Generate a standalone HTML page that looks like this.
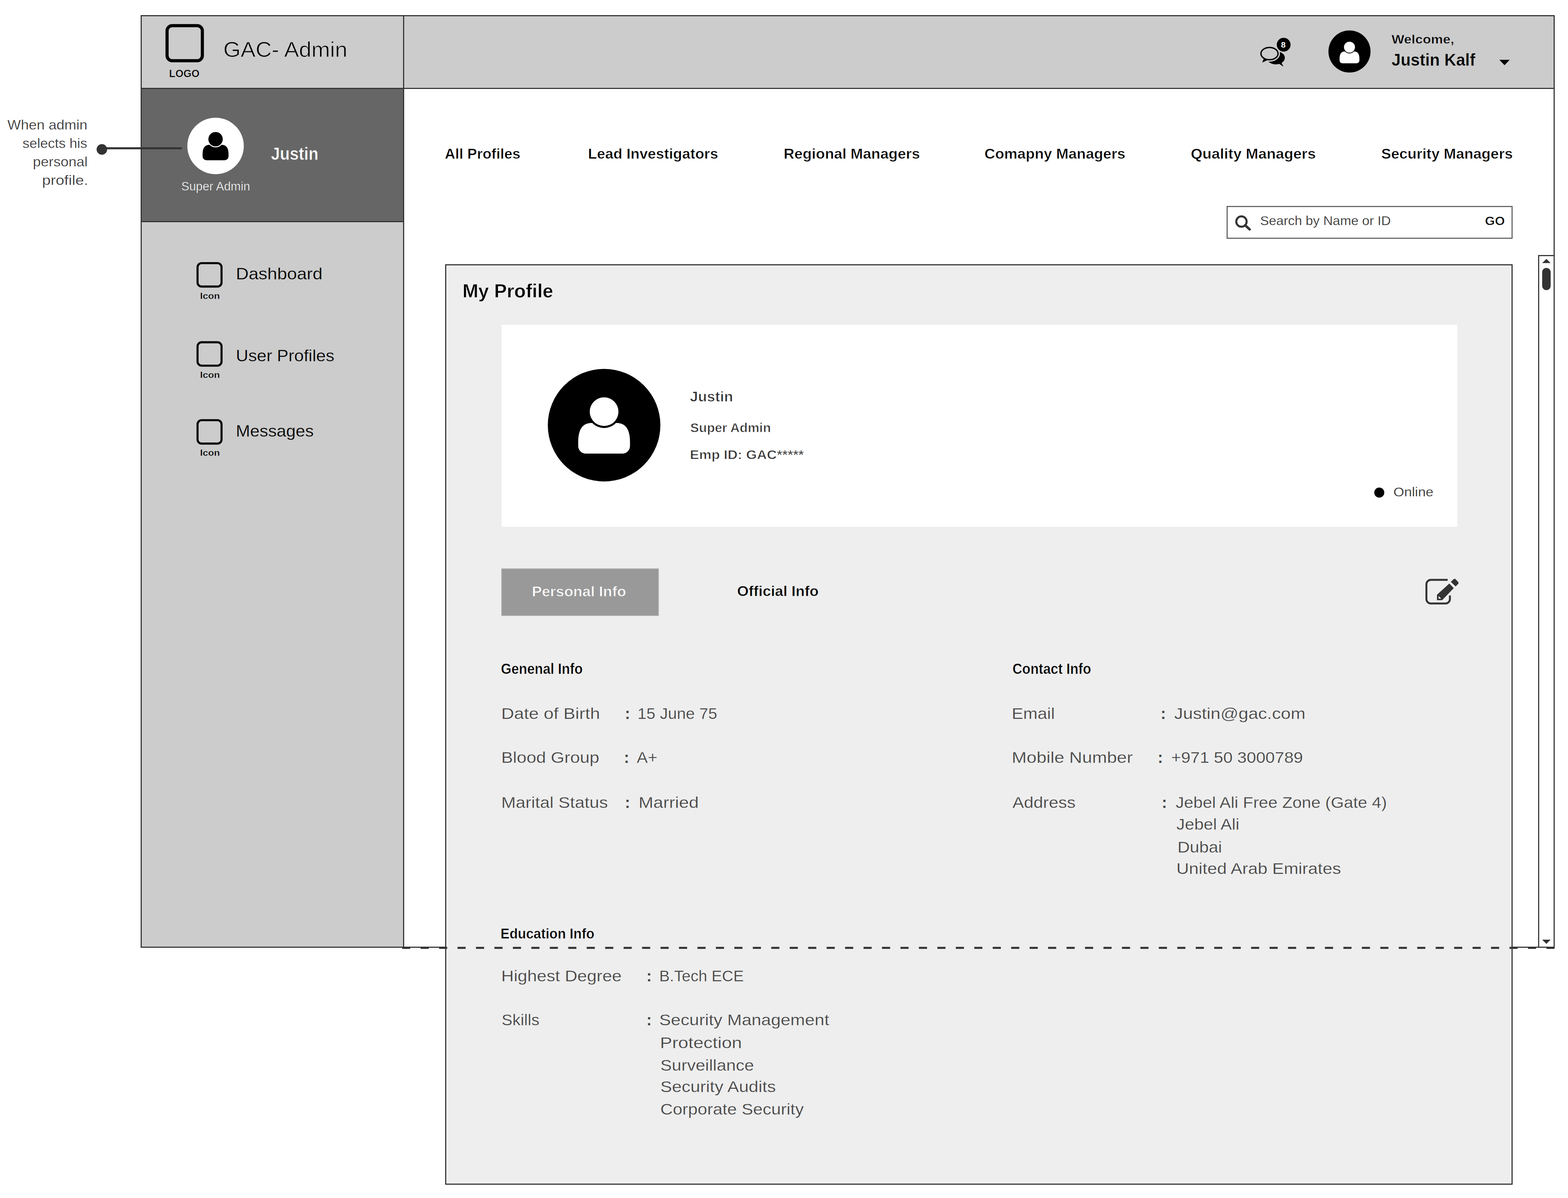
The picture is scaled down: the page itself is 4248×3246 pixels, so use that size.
<!DOCTYPE html>
<html lang="en">
<head>
<meta charset="utf-8">
<title>GAC- Admin - My Profile</title>
<style>
html,body{margin:0;padding:0;background:#fff;}
html{width:4248px;height:3246px;}
body{width:4248px;height:3246px;position:relative;font-family:"Liberation Sans",sans-serif;color:#000;}
#page{position:absolute;left:0;top:0;width:4248px;height:3246px;overflow:hidden;background:#fff;}
#page div,#page nav,#page header,#page aside,#page main,#page section{position:absolute;box-sizing:border-box;}
.t{position:absolute;white-space:pre;line-height:1;margin:0;padding:0;font-weight:400;transform-origin:0 0;}
#frame{left:381px;top:41px;width:3831px;height:2527px;border:3px solid #333;background:#fff;}
#header{left:384px;top:44px;width:3825px;height:197px;background:#ccc;border-bottom:3px solid #333;}
#sidebar{left:384px;top:44px;width:711px;height:2521px;background:#ccc;border-right:3px solid #333;}
#userblock{left:384px;top:238px;width:708px;height:364px;background:#666;border-top:3px solid #333;border-bottom:3px solid #333;}
#search{left:3323px;top:558px;width:775px;height:89px;border:3px solid #636363;background:#fff;}
#scroll{left:4167px;top:691px;width:45px;height:1877px;border:3px solid #333;background:#fff;}
#thumb{left:4178px;top:726px;width:23px;height:60px;border-radius:11.5px;background:#333;}
#panel{left:1206px;top:716px;width:2892px;height:2494px;border:3px solid #333;background:#eee;}
#card{left:1359px;top:880px;width:2589px;height:547px;background:#fff;}
#tab1{left:1358px;top:1540px;width:427px;height:129px;background:#999;border:2px solid #b0b0b0;}
svg#art{position:absolute;left:0;top:0;width:4248px;height:3246px;overflow:visible;}
</style>
</head>
<body>
<div id="page">
<div id="frame"></div>
<header id="header"></header>
<aside id="sidebar"></aside>
<div id="userblock"></div>
<div id="search"></div>
<div id="scroll"></div>
<div id="thumb"></div>
<main id="panel"></main>
<section id="card"></section>
<div id="tab1"></div>
<svg id="art" viewBox="0 0 4248 3246" width="4248" height="3246">
<!-- dashed fold line -->
<line x1="1089.5" y1="2568.3" x2="4212" y2="2568.3" stroke="#333" stroke-width="5.6" stroke-dasharray="22 28"/>
<!-- logo placeholder -->
<rect x="452.6" y="69.4" width="95.6" height="95.2" rx="14" ry="14" fill="none" stroke="#000" stroke-width="8.5"/>
<!-- sidebar icon placeholders -->
<rect x="535.2" y="713" width="65" height="63.4" rx="11" ry="11" fill="none" stroke="#000" stroke-width="5.6"/>
<rect x="535.2" y="927.4" width="65" height="63.4" rx="11" ry="11" fill="none" stroke="#000" stroke-width="5.6"/>
<rect x="535.2" y="1138.5" width="65" height="63.4" rx="11" ry="11" fill="none" stroke="#000" stroke-width="5.6"/>
<!-- annotation connector -->
<line x1="276" y1="401.8" x2="492.5" y2="401.8" stroke="#333" stroke-width="5.6"/>
<circle cx="276" cy="404.8" r="14.3" fill="#333"/>
<!-- sidebar avatar -->
<circle cx="584" cy="395.5" r="76.5" fill="#fff"/>
<g transform="translate(584,395.5) scale(0.765)" fill="#000">
<path d="M-46,30 C-46,10 -40,-4 -22,-4 L22,-4 C40,-4 46,10 46,30 L46,37 A13.5,13.5 0 0 1 32.5,50.5 L-32.5,50.5 A13.5,13.5 0 0 1 -46,37 Z"/>
<circle cx="0" cy="-24" r="29" fill="#fff"/>
<circle cx="0" cy="-24" r="25.5"/>
</g>
<!-- header avatar -->
<circle cx="3656" cy="139.5" r="57" fill="#000"/>
<g transform="translate(3656,141.9) scale(0.585)" fill="#fff">
<path d="M-46,30 C-46,10 -40,-4 -22,-4 L22,-4 C40,-4 46,10 46,30 L46,37 A13.5,13.5 0 0 1 32.5,50.5 L-32.5,50.5 A13.5,13.5 0 0 1 -46,37 Z"/>
<circle cx="0" cy="-24" r="29" fill="#000"/>
<circle cx="0" cy="-24" r="25.5"/>
</g>
<!-- card avatar -->
<circle cx="1636.6" cy="1152" r="152.5" fill="#000"/>
<g transform="translate(1636.6,1152) scale(1.525)" fill="#fff">
<path d="M-46,30 C-46,10 -40,-4 -22,-4 L22,-4 C40,-4 46,10 46,30 L46,37 A13.5,13.5 0 0 1 32.5,50.5 L-32.5,50.5 A13.5,13.5 0 0 1 -46,37 Z"/>
<circle cx="0" cy="-24" r="29" fill="#000"/>
<circle cx="0" cy="-24" r="25.5"/>
</g>
<!-- chat icon -->
<g>
<ellipse cx="3456.4" cy="156.6" rx="24.5" ry="17.8" fill="#000"/>
<path d="M3458,168 L3477,180.5 L3470,166 Z" fill="#000"/>
<ellipse cx="3439.3" cy="145.2" rx="28.5" ry="22" fill="#ccc"/>
<path d="M3425,156 L3419.5,169.5 L3436,162 Z" fill="#000"/>
<ellipse cx="3439.3" cy="145.2" rx="23.2" ry="16.6" fill="#ccc" stroke="#000" stroke-width="3.6"/>
<circle cx="3477.7" cy="121.1" r="18.7" fill="#000"/>
</g>
<!-- caret -->
<path d="M4062,162 L4090,162 L4076,176.7 Z" fill="#000"/>
<!-- search icon -->
<circle cx="3363.3" cy="600.3" r="14" fill="none" stroke="#333" stroke-width="5.6"/>
<line x1="3373.5" y1="610.5" x2="3385.5" y2="621.5" stroke="#333" stroke-width="6.5" stroke-linecap="round"/>
<!-- scrollbar arrows -->
<path d="M4178,712.8 L4201,712.8 L4189.5,701.4 Z" fill="#333"/>
<path d="M4178,2546 L4201,2546 L4189.5,2557.4 Z" fill="#333"/>
<!-- online dot -->
<circle cx="3736.7" cy="1334.7" r="13.6" fill="#000"/>
<!-- edit icon -->
<g>
<path d="M3922,1571.2 L3876.5,1571.2 A12,12 0 0 0 3864.4,1583.2 L3864.4,1623 A12,12 0 0 0 3876.5,1635.1 L3916,1635.1 A12,12 0 0 0 3928.1,1623 L3928.1,1613.5" fill="none" stroke="#333" stroke-width="5.2"/>
<path d="M3893,1611.5 L3926.5,1581 L3938.5,1593.5 L3907,1626.3 L3893,1626.3 Z" fill="#333"/>
<path d="M3897.5,1615 L3904.5,1622 L3897.5,1622 Z" fill="#eee"/>
<path d="M3930.5,1576.5 L3938.5,1569 Q3941,1567.5 3943.5,1569.5 L3950.5,1577 Q3952.5,1579.5 3950.5,1582 L3943.5,1589 Z" fill="#333"/>
</g>
</svg>
<span class="t" style="left:458.00px;top:184.95px;font-size:28.90px;transform:scaleX(0.9704);font-weight:700;-webkit-text-stroke:0.7px #ccc;">LOGO</span>
<span class="t" style="left:605.00px;top:104.94px;font-size:58.10px;transform:scaleX(1.0413);-webkit-text-stroke:1.2px #ccc;">GAC- Admin</span>
<span class="t" style="left:3770.00px;top:88.76px;font-size:34.00px;transform:scaleX(1.0736);font-weight:700;-webkit-text-stroke:0.7px #ccc;">Welcome,</span>
<span class="t" style="left:3770.00px;top:139.75px;font-size:45.80px;transform:scaleX(0.9682);font-weight:700;-webkit-text-stroke:0.5px #ccc;">Justin Kalf</span>
<span class="t" style="left:3470.50px;top:111.49px;font-size:22.40px;font-weight:700;color:#fff;">8</span>
<span class="t" style="left:20.00px;top:320.12px;font-size:37.40px;transform:scaleX(1.0330);-webkit-text-stroke:0.4px #fff;color:#333;">When admin</span>
<span class="t" style="left:61.00px;top:370.12px;font-size:37.40px;transform:scaleX(1.0035);-webkit-text-stroke:0.4px #fff;color:#333;">selects his</span>
<span class="t" style="left:88.50px;top:420.12px;font-size:37.40px;transform:scaleX(1.0351);-webkit-text-stroke:0.4px #fff;color:#333;">personal</span>
<span class="t" style="left:113.50px;top:470.12px;font-size:37.40px;transform:scaleX(1.1125);-webkit-text-stroke:0.4px #fff;color:#333;">profile.</span>
<span class="t" style="left:733.50px;top:391.62px;font-size:48.10px;transform:scaleX(0.9081);font-weight:700;-webkit-text-stroke:0.7px #666;color:#fff;">Justin</span>
<span class="t" style="left:491.00px;top:489.31px;font-size:32.60px;-webkit-text-stroke:0.6px #666;color:#fff;">Super Admin</span>
<span class="t" style="left:542.00px;top:790.76px;font-size:23.40px;transform:scaleX(1.1187);font-weight:700;-webkit-text-stroke:0.5px #ccc;">Icon</span>
<span class="t" style="left:542.00px;top:1004.76px;font-size:23.40px;transform:scaleX(1.1187);font-weight:700;-webkit-text-stroke:0.5px #ccc;">Icon</span>
<span class="t" style="left:542.00px;top:1216.26px;font-size:23.40px;transform:scaleX(1.1187);font-weight:700;-webkit-text-stroke:0.5px #ccc;">Icon</span>
<span class="t" style="left:639.00px;top:719.88px;font-size:43.70px;transform:scaleX(1.0986);-webkit-text-stroke:0.4px #ccc;">Dashboard</span>
<span class="t" style="left:639.00px;top:942.38px;font-size:43.70px;transform:scaleX(1.0670);-webkit-text-stroke:0.4px #ccc;">User Profiles</span>
<span class="t" style="left:639.00px;top:1145.88px;font-size:43.70px;transform:scaleX(1.0588);-webkit-text-stroke:0.4px #ccc;">Messages</span>
<span class="t" style="left:1204.50px;top:397.54px;font-size:38.50px;transform:scaleX(1.0183);font-weight:700;-webkit-text-stroke:0.7px #fff;">All Profiles</span>
<span class="t" style="left:1593.00px;top:397.54px;font-size:38.50px;transform:scaleX(1.0364);font-weight:700;-webkit-text-stroke:0.7px #fff;">Lead Investigators</span>
<span class="t" style="left:2123.00px;top:397.54px;font-size:38.50px;transform:scaleX(1.0466);font-weight:700;-webkit-text-stroke:0.7px #fff;">Regional Managers</span>
<span class="t" style="left:2666.50px;top:397.54px;font-size:38.50px;transform:scaleX(1.0438);font-weight:700;-webkit-text-stroke:0.7px #fff;">Comapny Managers</span>
<span class="t" style="left:3225.50px;top:397.54px;font-size:38.50px;transform:scaleX(1.0555);font-weight:700;-webkit-text-stroke:0.7px #fff;">Quality Managers</span>
<span class="t" style="left:3741.50px;top:397.54px;font-size:38.50px;transform:scaleX(1.0414);font-weight:700;-webkit-text-stroke:0.7px #fff;">Security Managers</span>
<span class="t" style="left:3413.50px;top:580.60px;font-size:34.80px;transform:scaleX(1.0277);-webkit-text-stroke:0.3px #fff;color:#333;">Search by Name or ID</span>
<span class="t" style="left:4022.50px;top:580.76px;font-size:34.00px;transform:scaleX(1.0165);font-weight:700;-webkit-text-stroke:0.7px #fff;">GO</span>
<span class="t" style="left:1253.00px;top:764.41px;font-size:50.90px;transform:scaleX(1.0101);font-weight:700;-webkit-text-stroke:0.8px #eee;">My Profile</span>
<span class="t" style="left:1868.50px;top:1056.04px;font-size:38.80px;transform:scaleX(1.0237);font-weight:700;-webkit-text-stroke:0.9px #fff;color:#333;">Justin</span>
<span class="t" style="left:1870.00px;top:1141.76px;font-size:34.30px;transform:scaleX(1.0298);font-weight:700;-webkit-text-stroke:0.9px #fff;color:#333;">Super Admin</span>
<span class="t" style="left:1869.00px;top:1214.76px;font-size:34.30px;transform:scaleX(1.0946);font-weight:700;-webkit-text-stroke:0.9px #fff;color:#333;">Emp ID: GAC*****</span>
<span class="t" style="left:3774.50px;top:1315.52px;font-size:35.50px;transform:scaleX(1.0566);-webkit-text-stroke:0.3px #fff;color:#333;">Online</span>
<span class="t" style="left:1440.50px;top:1584.27px;font-size:38.70px;transform:scaleX(1.0425);font-weight:700;-webkit-text-stroke:1.0px #999;color:#fff;">Personal Info</span>
<span class="t" style="left:1997.00px;top:1583.27px;font-size:38.20px;transform:scaleX(1.0515);font-weight:700;-webkit-text-stroke:0.7px #eee;">Official Info</span>
<span class="t" style="left:1356.50px;top:1792.64px;font-size:40.20px;transform:scaleX(0.9108);font-weight:700;-webkit-text-stroke:0.7px #eee;">Genenal Info</span>
<span class="t" style="left:2742.50px;top:1792.64px;font-size:40.20px;transform:scaleX(0.9087);font-weight:700;-webkit-text-stroke:0.7px #eee;">Contact Info</span>
<span class="t" style="left:1357.50px;top:1911.81px;font-size:42.60px;transform:scaleX(1.1296);-webkit-text-stroke:0.4px #eee;color:#444;">Date of Birth</span>
<span class="t" style="left:1693.00px;top:1912.81px;font-size:42.00px;font-weight:700;color:#444;">:</span>
<span class="t" style="left:1727.00px;top:1911.81px;font-size:42.60px;transform:scaleX(1.0244);-webkit-text-stroke:0.4px #eee;color:#444;">15 June 75</span>
<span class="t" style="left:1357.50px;top:2031.31px;font-size:42.60px;transform:scaleX(1.1107);-webkit-text-stroke:0.4px #eee;color:#444;">Blood Group</span>
<span class="t" style="left:1690.50px;top:2032.31px;font-size:42.00px;font-weight:700;color:#444;">:</span>
<span class="t" style="left:1724.50px;top:2031.31px;font-size:42.60px;transform:scaleX(1.0521);-webkit-text-stroke:0.4px #eee;color:#444;">A+</span>
<span class="t" style="left:1357.50px;top:2153.31px;font-size:42.60px;transform:scaleX(1.1090);-webkit-text-stroke:0.4px #eee;color:#444;">Marital Status</span>
<span class="t" style="left:1693.00px;top:2154.31px;font-size:42.00px;font-weight:700;color:#444;">:</span>
<span class="t" style="left:1729.50px;top:2153.31px;font-size:42.60px;transform:scaleX(1.1285);-webkit-text-stroke:0.4px #eee;color:#444;">Married</span>
<span class="t" style="left:2741.00px;top:1911.81px;font-size:42.60px;transform:scaleX(1.0940);-webkit-text-stroke:0.4px #eee;color:#444;">Email</span>
<span class="t" style="left:3144.50px;top:1912.81px;font-size:42.00px;font-weight:700;color:#444;">:</span>
<span class="t" style="left:3180.50px;top:1911.81px;font-size:42.60px;transform:scaleX(1.1273);-webkit-text-stroke:0.4px #eee;color:#444;">Justin@gac.com</span>
<span class="t" style="left:2741.00px;top:2031.31px;font-size:42.60px;transform:scaleX(1.1352);-webkit-text-stroke:0.4px #eee;color:#444;">Mobile Number</span>
<span class="t" style="left:3136.50px;top:2032.31px;font-size:42.00px;font-weight:700;color:#444;">:</span>
<span class="t" style="left:3173.00px;top:2031.31px;font-size:42.60px;transform:scaleX(1.0726);-webkit-text-stroke:0.4px #eee;color:#444;">+971 50 3000789</span>
<span class="t" style="left:2743.00px;top:2153.31px;font-size:42.60px;transform:scaleX(1.0935);-webkit-text-stroke:0.4px #eee;color:#444;">Address</span>
<span class="t" style="left:3147.50px;top:2154.31px;font-size:42.00px;font-weight:700;color:#444;">:</span>
<span class="t" style="left:3185.00px;top:2153.31px;font-size:42.60px;transform:scaleX(1.0697);-webkit-text-stroke:0.4px #eee;color:#444;">Jebel Ali Free Zone (Gate 4)</span>
<span class="t" style="left:3186.50px;top:2211.81px;font-size:42.60px;transform:scaleX(1.0761);-webkit-text-stroke:0.4px #eee;color:#444;">Jebel Ali</span>
<span class="t" style="left:3190.00px;top:2274.31px;font-size:42.60px;transform:scaleX(1.0838);-webkit-text-stroke:0.4px #eee;color:#444;">Dubai</span>
<span class="t" style="left:3187.00px;top:2331.81px;font-size:42.60px;transform:scaleX(1.1083);-webkit-text-stroke:0.4px #eee;color:#444;">United Arab Emirates</span>
<span class="t" style="left:1356.00px;top:2510.54px;font-size:38.50px;transform:scaleX(0.9519);font-weight:700;-webkit-text-stroke:0.7px #eee;">Education Info</span>
<span class="t" style="left:1357.50px;top:2623.31px;font-size:42.60px;transform:scaleX(1.1021);-webkit-text-stroke:0.4px #eee;color:#444;">Highest Degree</span>
<span class="t" style="left:1751.50px;top:2624.31px;font-size:42.00px;font-weight:700;color:#444;">:</span>
<span class="t" style="left:1786.00px;top:2623.31px;font-size:42.60px;transform:scaleX(0.9973);-webkit-text-stroke:0.4px #eee;color:#444;">B.Tech ECE</span>
<span class="t" style="left:1358.50px;top:2741.81px;font-size:42.60px;transform:scaleX(1.0294);-webkit-text-stroke:0.4px #eee;color:#444;">Skills</span>
<span class="t" style="left:1751.50px;top:2742.81px;font-size:42.00px;font-weight:700;color:#444;">:</span>
<span class="t" style="left:1785.50px;top:2741.81px;font-size:42.60px;transform:scaleX(1.1117);-webkit-text-stroke:0.4px #eee;color:#444;">Security Management</span>
<span class="t" style="left:1787.50px;top:2803.81px;font-size:42.60px;transform:scaleX(1.1578);-webkit-text-stroke:0.4px #eee;color:#444;">Protection</span>
<span class="t" style="left:1788.50px;top:2864.81px;font-size:42.60px;transform:scaleX(1.0930);-webkit-text-stroke:0.4px #eee;color:#444;">Surveillance</span>
<span class="t" style="left:1788.50px;top:2923.31px;font-size:42.60px;transform:scaleX(1.1108);-webkit-text-stroke:0.4px #eee;color:#444;">Security Audits</span>
<span class="t" style="left:1788.50px;top:2984.31px;font-size:42.60px;transform:scaleX(1.0941);-webkit-text-stroke:0.4px #eee;color:#444;">Corporate Security</span>
</div>
</body>
</html>
